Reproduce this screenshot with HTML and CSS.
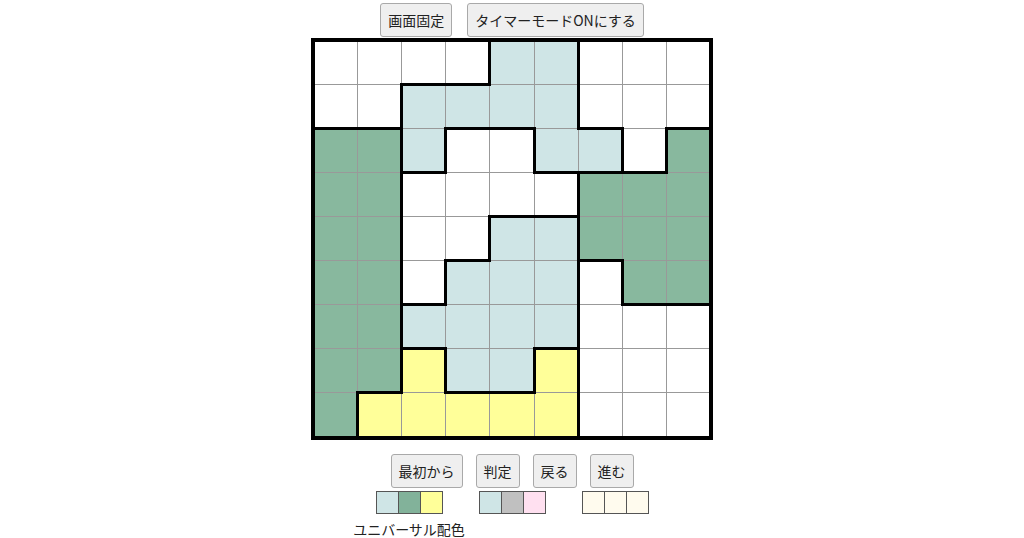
FILE: index.html
```html
<!DOCTYPE html>
<html lang="ja">
<head>
<meta charset="utf-8">
<title>パズル</title>
<link rel="stylesheet" href="styles.css">
</head>
<body>
<div class="top-bar">
  <button class="btn">画面固定</button>
  <button class="btn">タイマーモードONにする</button>
</div>
<table class="board">
  <tr><td class="w"></td><td class="w"></td><td class="w"></td><td class="w"></td><td class="b l"></td><td class="b"></td><td class="w l"></td><td class="w"></td><td class="w"></td></tr>
  <tr><td class="w"></td><td class="w"></td><td class="b t l"></td><td class="b t"></td><td class="b"></td><td class="b"></td><td class="w l"></td><td class="w"></td><td class="w"></td></tr>
  <tr><td class="g t"></td><td class="g t"></td><td class="b l"></td><td class="w t l"></td><td class="w t"></td><td class="b l"></td><td class="b t"></td><td class="w l"></td><td class="g t l"></td></tr>
  <tr><td class="g"></td><td class="g"></td><td class="w t l"></td><td class="w"></td><td class="w"></td><td class="w t"></td><td class="g t l"></td><td class="g t"></td><td class="g"></td></tr>
  <tr><td class="g"></td><td class="g"></td><td class="w l"></td><td class="w"></td><td class="b t l"></td><td class="b t"></td><td class="g l"></td><td class="g"></td><td class="g"></td></tr>
  <tr><td class="g"></td><td class="g"></td><td class="w l"></td><td class="b t l"></td><td class="b"></td><td class="b"></td><td class="w t l"></td><td class="g l"></td><td class="g"></td></tr>
  <tr><td class="g"></td><td class="g"></td><td class="b t l"></td><td class="b"></td><td class="b"></td><td class="b"></td><td class="w l"></td><td class="w t"></td><td class="w t"></td></tr>
  <tr><td class="g"></td><td class="g"></td><td class="y t l"></td><td class="b l"></td><td class="b"></td><td class="y t l"></td><td class="w l"></td><td class="w"></td><td class="w"></td></tr>
  <tr><td class="g"></td><td class="y t l"></td><td class="y"></td><td class="y t"></td><td class="y t"></td><td class="y"></td><td class="w l"></td><td class="w"></td><td class="w"></td></tr>
</table>
<div class="controls">
  <button class="btn">最初から</button>
  <button class="btn">判定</button>
  <button class="btn">戻る</button>
  <button class="btn">進む</button>
</div>
<div class="palettes">
  <div class="palette-group">
    <table class="swatches"><tr><td class="sw-blue"></td><td class="sw-green"></td><td class="sw-yellow"></td></tr></table>
    <div class="palette-label">ユニバーサル配色</div>
  </div>
  <div class="palette-group">
    <table class="swatches"><tr><td class="sw-blue"></td><td class="sw-gray"></td><td class="sw-pink"></td></tr></table>
  </div>
  <div class="palette-group">
    <table class="swatches"><tr><td class="sw-cream"></td><td class="sw-cream"></td><td class="sw-cream"></td></tr></table>
  </div>
</div>
</body>
</html>
```
FILE: styles.css
```css
html, body {
  margin: 0;
  padding: 0;
  background: #fff;
}
body {
  font-family: "Noto Sans CJK JP", "Noto Sans", sans-serif;
  color: #222;
}
.top-bar {
  display: flex;
  justify-content: center;
  gap: 15px;
  padding-top: 3px;
}
.btn {
  font-family: "Noto Sans CJK JP", "Noto Sans", sans-serif;
  font-size: 14px;
  line-height: 20px;
  padding: 6px 7px;
  background: #efefef;
  border: 1px solid #a9a9a9;
  border-radius: 3px;
  color: #222;
  margin: 0;
}
.board {
  border-collapse: collapse;
  table-layout: fixed;
  width: 402px;
  margin: 1px auto 0;
  border: 4px solid #000;
}
.board tr {
  height: 44px;
}
.board tr:last-child {
  height: 46px;
}
.board td {
  padding: 0;
  border: 1px solid #999;
}
.board td.t { border-top: 3px solid #000; }
.board td.l { border-left: 3px solid #000; }
.board td.w { background: #fff; }
.board td.b { background: #cfe5e6; }
.board td.g { background: #88b89e; }
.board td.y { background: #ffff99; }
.controls {
  display: flex;
  justify-content: center;
  gap: 13px;
  margin-top: 14px;
}
.palettes {
  display: flex;
  justify-content: center;
  gap: 36px;
  margin-top: 3px;
}
.palette-group {
  display: flex;
  flex-direction: column;
  align-items: center;
  width: 67px;
}
.swatches {
  border-collapse: collapse;
}
.swatches td {
  width: 21px;
  height: 21px;
  padding: 0;
  border: 1px solid #555;
}
.palette-label {
  font-size: 14px;
  line-height: 20px;
  white-space: nowrap;
  margin-top: 5px;
}
.sw-blue { background: #cfe5e6; }
.sw-green { background: #82b29a; }
.sw-yellow { background: #ffff99; }
.sw-gray { background: #c0c0c0; }
.sw-pink { background: #ffe0f0; }
.sw-cream { background: #fffbee; }
```
